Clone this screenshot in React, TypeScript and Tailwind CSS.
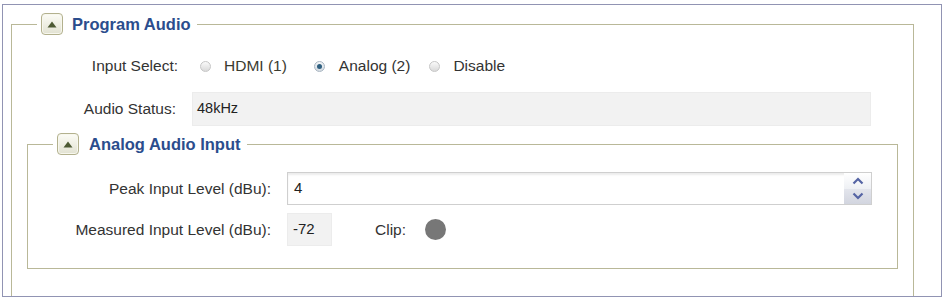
import React from 'react';

// small toggle button used in the fieldset legends
const CollapseButton: React.FC = () => (
  <span className="flex h-[22px] w-[22px] items-center justify-center rounded-[4px] border border-[#b3b18e] bg-gradient-to-b from-[#fcfcf6] to-[#e2e2d2] shadow-[inset_0_0_0_1px_#f7f7ee]">
    <svg width="10" height="7" viewBox="0 0 10 7">
      <polygon points="5,0.5 9.5,6.5 0.5,6.5" fill="#4d5a34" />
    </svg>
  </span>
);

const Radio: React.FC<{ checked?: boolean }> = ({ checked }) => (
  <span
    className={
      checked
        ? 'flex h-[11px] w-[11px] items-center justify-center rounded-full border border-[#a9b6c2] bg-gradient-to-b from-[#f4f6f8] to-[#d3dae1]'
        : 'block h-[11px] w-[11px] rounded-full border border-[#c6c6c6] bg-gradient-to-b from-[#fafafa] to-[#dadada]'
    }
  >
    {checked && <span className="h-[5px] w-[5px] rounded-full bg-[#2f5f7f]" />}
  </span>
);

const Legend: React.FC<{ title: string; gap: string }> = ({ title, gap }) => (
  <legend className="ml-[25px] pl-[4px] pr-[6px]">
    <div className={'flex items-center ' + gap}>
      <CollapseButton />
      <span className="text-[16.5px] font-bold leading-[22px] text-[#2b4d8d]">{title}</span>
    </div>
  </legend>
);

const App: React.FC = () => {
  const font = { fontFamily: '"Liberation Sans", Arial, sans-serif' };

  return (
    <div className="h-[300px] w-[943px] bg-white pt-[4px]" style={font}>
      <div className="ml-[2px] h-[293px] w-[940px] overflow-hidden border border-[#9194b3] bg-white">
        <fieldset className="ml-[8px] mr-[27px] mt-[8px] border border-[#b9b898] pb-[60px]">
          <Legend title="Program Audio" gap="gap-[9px]" />

          {/* Input Select */}
          <div className="mt-[20px] flex h-[22px] items-center text-[15.5px] text-[#333]">
            <div className="w-[166px] text-right">Input Select:</div>
            <div className="ml-[22px] flex items-center">
              <Radio />
              <span className="ml-[13px] text-[#3b3b30]">HDMI (1)</span>
              <span className="ml-[27px]">
                <Radio checked />
              </span>
              <span className="ml-[14px]">Analog (2)</span>
              <span className="ml-[19px]">
                <Radio />
              </span>
              <span className="ml-[13px]">Disable</span>
            </div>
          </div>

          {/* Audio Status */}
          <div className="mt-[15px] flex items-center text-[15.5px] text-[#333]">
            <div className="w-[164px] text-right">Audio Status:</div>
            <div className="ml-[16px] flex h-[34px] w-[679px] items-center border border-[#ececec] bg-[#f2f2f2] pl-[4px] text-[14.5px] text-[#222]">
              48kHz
            </div>
          </div>

          {/* Analog Audio Input */}
          <fieldset className="ml-[15px] mr-[15px] mt-[7px] border border-[#b9b898] pb-[22px]">
            <Legend title="Analog Audio Input" gap="gap-[10px]" />

            <div className="mt-[17px] flex items-center text-[15.5px] text-[#333]">
              <div className="w-[243px] text-right">Peak Input Level (dBu):</div>
              <div className="ml-[16px] flex h-[33px] w-[585px] border border-[#cfcfcf] bg-white shadow-[inset_0_2px_2px_#ececec]">
                <div className="flex flex-1 items-center pl-[6px] text-[15px] text-[#222]">4</div>
                <div className="flex w-[27px] flex-col">
                  <div className="flex flex-1 items-center justify-center bg-gradient-to-b from-[#ffffff] to-[#eef0f4]">
                    <svg width="12" height="8" viewBox="0 0 12 8">
                      <polyline points="1.5,6.5 6,2 10.5,6.5" fill="none" stroke="#5564a4" strokeWidth="2.2" />
                    </svg>
                  </div>
                  <div className="flex flex-1 items-center justify-center bg-gradient-to-b from-[#e3e5ec] to-[#d2d5df]">
                    <svg width="12" height="8" viewBox="0 0 12 8">
                      <polyline points="1.5,1.5 6,6 10.5,1.5" fill="none" stroke="#5564a4" strokeWidth="2.2" />
                    </svg>
                  </div>
                </div>
              </div>
            </div>

            <div className="mt-[8px] flex items-center text-[15.5px] text-[#333]">
              <div className="w-[243px] text-right">Measured Input Level (dBu):</div>
              <div className="ml-[16px] flex h-[33px] w-[45px] items-center border border-[#ececec] bg-[#f2f2f2] pl-[5px] text-[15px] text-[#222]">
                -72
              </div>
              <span className="ml-[43px]">Clip:</span>
              <span className="ml-[19px] h-[21px] w-[21px] rounded-full bg-[#777] blur-[0.6px]" />
            </div>
          </fieldset>
        </fieldset>
      </div>
    </div>
  );
};

export default App;
